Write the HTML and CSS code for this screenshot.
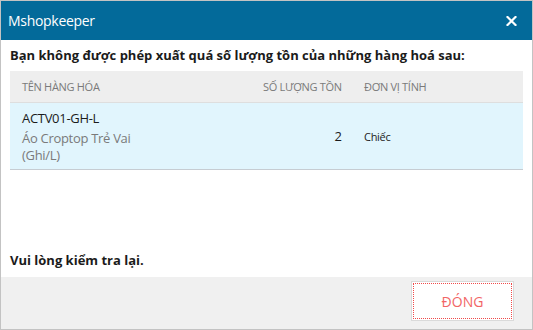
FILE: index.html
```html
<!DOCTYPE html>
<html lang="vi">
<head>
    <meta charset="UTF-8">
    <meta name="viewport" content="width=device-width, initial-scale=1.0">
    <title>Mshopkeeper</title>
    <link rel="stylesheet" href="styles.css">
</head>
<body>
    <div class="dialog">
        <div class="dialog-header">
            <span class="dialog-title">Mshopkeeper</span>
            <button class="close-btn" aria-label="Đóng">
                <svg width="11" height="10" viewBox="0 0 11 10">
                    <path d="M1.5 1 L9.5 9 M9.5 1 L1.5 9" stroke="#fff" stroke-width="2.2" stroke-linecap="square"/>
                </svg>
            </button>
        </div>

        <div class="dialog-body">
            <p class="message">Bạn không được phép xuất quá số lượng tồn của những hàng hoá sau:</p>

            <div class="grid">
                <div class="grid-head">
                    <div class="col-name">TÊN HÀNG HÓA</div>
                    <div class="head-qty">SỐ LƯỢNG TỒN</div>
                    <div class="col-unit">ĐƠN VỊ TÍNH</div>
                </div>
                <div class="grid-row">
                    <div class="col-name">
                        <div class="item-code">ACTV01-GH-L</div>
                        <div class="item-name">Áo Croptop Trẻ Vai (Ghi/L)</div>
                    </div>
                    <div class="col-qty">2</div>
                    <div class="col-unit unit-text">Chiếc</div>
                </div>
            </div>

            <p class="message bottom">Vui lòng kiểm tra lại.</p>
        </div>

        <div class="dialog-footer">
            <button class="btn-close">ĐÓNG</button>
        </div>
    </div>
</body>
</html>
```

FILE: styles.css
```css
body {
  margin: 0;
  padding: 0;
  font-family: "Open Sans", "Noto Sans", sans-serif;
  color: #1b1b1b;
}

/* Dialog frame */
.dialog {
  width: 533px;
  height: 330px;
  box-sizing: border-box;
  border: 1px solid #c3c3c3;
  display: flex;
  flex-direction: column;
  background: #fff;
}

.dialog-header {
  height: 39px;
  background: #036a9a;
  display: flex;
  align-items: center;
  justify-content: space-between;
  padding: 0 15px 0 7px;
}
.dialog-title {
  color: #fff;
  font-size: 14px;
  letter-spacing: -0.3px;
}
.close-btn {
  border: 0;
  background: none;
  padding: 0;
  display: flex;
}

/* Content */
.dialog-body {
  flex: 1;
  display: flex;
  flex-direction: column;
  padding: 6px 9px 8px 9px;
}
.message {
  margin: 0;
  font-size: 13px;
  line-height: 18px;
  font-weight: 700;
}
.message.bottom {
  margin-top: auto;
}

.grid {
  margin-top: 7px;
  font-size: 12px;
}
.grid-head,
.grid-row {
  display: grid;
  grid-template-columns: 160px 1fr 171px;
}
.grid-head {
  height: 31px;
  align-items: center;
  background: #eeeeee;
  border-bottom: 1px solid #dedede;
  color: #7a7a7a;
  font-size: 11px;
  letter-spacing: -0.3px;
}
.head-qty {
  padding-left: 93px;
  white-space: nowrap;
}
.grid-row {
  height: 66px;
  align-items: center;
  background: #e1f5fd;
  border-bottom: 1px solid #c6ccd2;
}
.col-name {
  padding-left: 12px;
}
.col-qty {
  text-align: right;
  padding-right: 10px;
  font-size: 13px;
}
.col-unit {
  padding-left: 12px;
}

.item-code {
  font-size: 13px;
  line-height: 20px;
  letter-spacing: -0.3px;
}
.item-name {
  font-size: 13px;
  line-height: 17px;
  color: #7a7a7a;
  margin-top: 2px;
  width: 136px;
  letter-spacing: -0.3px;
}
.unit-text {
  font-size: 11px;
  letter-spacing: -0.3px;
}

/* Footer */
.dialog-footer {
  height: 52px;
  box-sizing: border-box;
  background: #f0f0f0;
  display: flex;
  justify-content: flex-end;
  align-items: flex-start;
  padding: 4px 18px 0 0;
}
.btn-close {
  width: 103px;
  height: 40px;
  background: #fff;
  border: 1px solid #dadada;
  outline: 1px dotted #f04a4a;
  outline-offset: -3px;
  color: #f26565;
  font-family: "Open Sans", "Noto Sans", sans-serif;
  font-size: 14px;
  padding: 0;
}
```
